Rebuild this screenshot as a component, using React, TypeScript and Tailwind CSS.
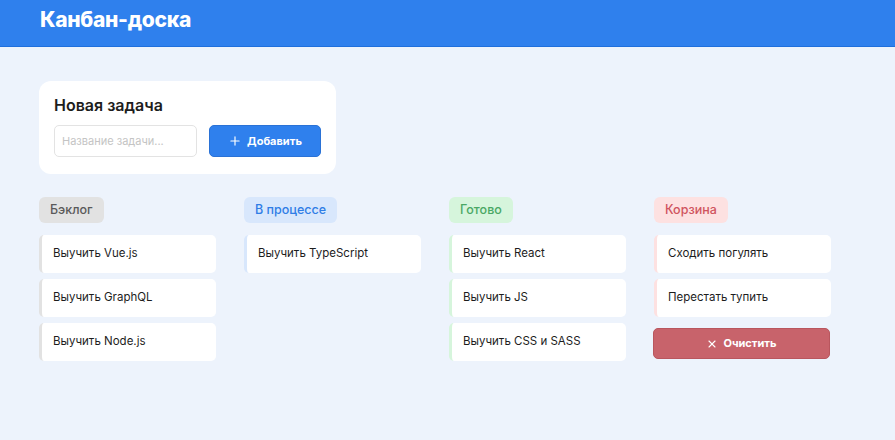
import { Plus, X } from "lucide-react";

type Column = {
  title: string;
  badge: string;
  border: string;
  tasks: string[];
};

const columns: Column[] = [
  {
    title: "Бэклог",
    badge: "bg-[#e2e2e2] text-[#5a5a5a]",
    border: "border-[#e2e2e2]",
    tasks: ["Выучить Vue.js", "Выучить GraphQL", "Выучить Node.js"],
  },
  {
    title: "В процессе",
    badge: "bg-[#d8e7fc] text-[#2f7de6]",
    border: "border-[#d8e7fc]",
    tasks: ["Выучить TypeScript"],
  },
  {
    title: "Готово",
    badge: "bg-[#d6f5dc] text-[#4aa864]",
    border: "border-[#d6f5dc]",
    tasks: ["Выучить React", "Выучить JS", "Выучить CSS и SASS"],
  },
  {
    title: "Корзина",
    badge: "bg-[#fde1e1] text-[#d0545e]",
    border: "border-[#fde1e1]",
    tasks: ["Сходить погулять", "Перестать тупить"],
  },
];

export default function App() {
  return (
    <div className="min-h-[440px] bg-[#edf3fc] font-['Inter','Noto_Sans',sans-serif] text-[#1d1d1d]">
      {/* Header */}
      <header className="h-[47px] bg-[#2f80ed] border-b border-[#1f6fdc] px-[40px] flex items-center">
        <h1 className="text-[21px] font-extrabold text-white tracking-[-0.3px] -mt-[6px]">
          Канбан-доска
        </h1>
      </header>

      <main className="px-[39px] pt-[34px]">
        {/* New task form */}
        <div className="w-[297px] bg-white rounded-[12px] px-[15px] pt-[12px] pb-[17px]">
          <h2 className="text-[16px] font-semibold leading-[24px] mb-[8px]">
            Новая задача
          </h2>
          <div className="flex gap-[12px]">
            <input
              placeholder="Название задачи..."
              className="w-[143px] h-[32px] rounded-[5px] border border-[#e3e3e3] px-[7px] text-[11px] placeholder:text-[#c4c4c4] outline-none"
            />
            <button className="w-[112px] h-[32px] rounded-[5px] bg-[#2f80ed] border border-[#2a72d6] text-white text-[11px] font-bold flex items-center justify-center gap-[5px]">
              <Plus className="w-[14px] h-[14px]" strokeWidth={2} />
              Добавить
            </button>
          </div>
        </div>

        {/* Board */}
        <div className="flex gap-[28px] mt-[23px]">
          {columns.map((col) => (
            <div key={col.title} className="w-[177px] flex flex-col items-start">
              <span
                className={`flex h-[26px] items-center px-[11px] rounded-[6px] text-[12.5px] font-medium ${col.badge}`}
              >
                {col.title}
              </span>
              <div className="mt-[12px] w-full flex flex-col gap-[6px]">
                {col.tasks.map((task) => (
                  <div
                    key={task}
                    className={`h-[38px] bg-white rounded-[5px] border-l-[3px] ${col.border} pl-[11px] flex items-center text-[11.5px]`}
                  >
                    {task}
                  </div>
                ))}
              </div>
              {col.title === "Корзина" && (
                <button className="mt-[11px] -ml-px w-[177px] h-[31px] rounded-[5px] bg-[#c8636b] border border-[#b9565e] text-white text-[11px] font-bold flex items-center justify-center gap-[5px]">
                  <X className="w-[12px] h-[12px]" strokeWidth={2.2} />
                  Очистить
                </button>
              )}
            </div>
          ))}
        </div>
      </main>
    </div>
  );
}
